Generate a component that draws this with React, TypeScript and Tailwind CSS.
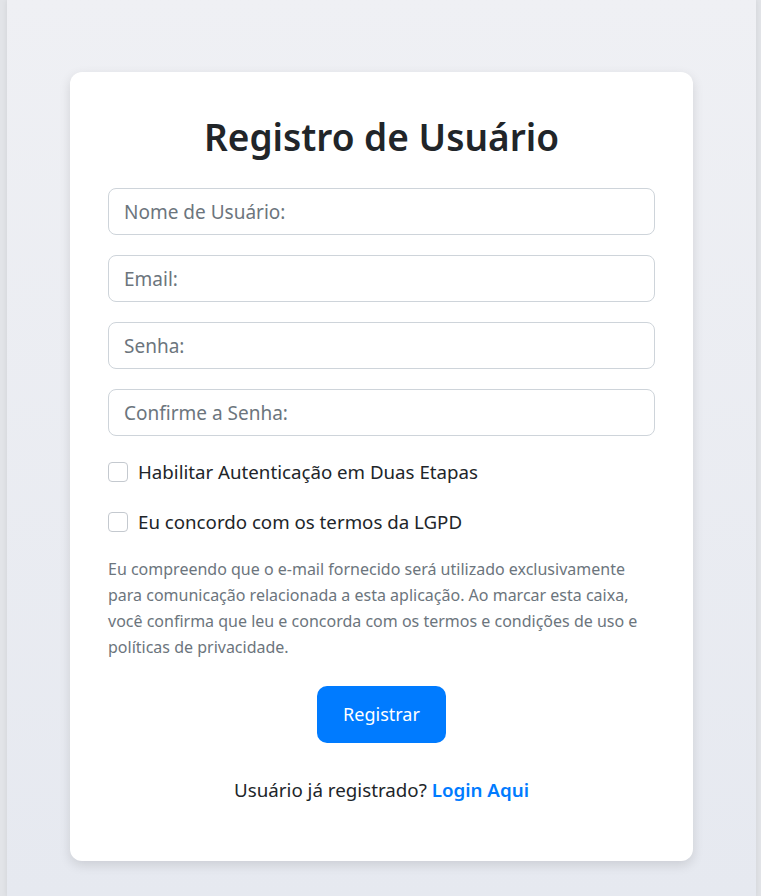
import * as React from "react"

const font = { fontFamily: '"Noto Sans", "Open Sans", sans-serif' }

function Field({ placeholder, type = "text" }: { placeholder: string; type?: string }) {
  return (
    <input
      type={type}
      placeholder={placeholder}
      className="w-full h-[47px] px-[15px] rounded-[8px] border border-[#ced4da] bg-white text-[19px] text-[#212529] placeholder:text-[#6c757d] outline-none"
    />
  )
}

function Check({ label }: { label: string }) {
  return (
    <label className="flex items-center h-[27px] text-[18.7px] text-[#212529] leading-[27px]">
      <span className="w-[20px] h-[20px] rounded-[4px] border border-[#c4c9cf] bg-white mr-[10px] shrink-0" />
      {label}
    </label>
  )
}

export default function App() {
  return (
    <div className="min-h-screen bg-[#e2e4e8] flex" style={font}>
      <div className="flex-1 ml-[7px] mr-[6px] bg-gradient-to-b from-[#eff0f4] to-[#e6e9f0] shadow-[0_0_6px_rgba(0,0,0,0.08)] pt-[72px] pb-[36px]">
        <div className="mx-[63px] w-[623px] bg-white rounded-[12px] shadow-[0_4px_12px_rgba(0,0,0,0.12)] px-[38px] pt-[41px] pb-[58px]">
          <h1 className="text-center text-[37px] leading-[48px] font-semibold text-[#212529] mb-[27px]">
            Registro de Usuário
          </h1>
          <div className="flex flex-col gap-[20px]">
            <Field placeholder="Nome de Usuário:" />
            <Field placeholder="Email:" type="email" />
            <Field placeholder="Senha:" type="password" />
            <Field placeholder="Confirme a Senha:" type="password" />
          </div>
          <div className="mt-[22px] flex flex-col gap-[23px]">
            <Check label="Habilitar Autenticação em Duas Etapas" />
            <Check label="Eu concordo com os termos da LGPD" />
          </div>
          <p className="mt-[21px] text-[16px] leading-[26px] text-[#6c757d]">
            Eu compreendo que o e-mail fornecido será utilizado exclusivamente para comunicação relacionada a esta aplicação. Ao marcar esta caixa, você confirma que leu e concorda com os termos e condições de uso e políticas de privacidade.
          </p>
          <div className="mt-[26px] flex justify-center">
            <button className="w-[129px] h-[57px] rounded-[10px] bg-[#007bff] text-white text-[18px]">
              Registrar
            </button>
          </div>
          <p className="mt-[33px] text-center text-[18.75px] leading-[27px] text-[#212529]">
            Usuário já registrado?{" "}
            <a href="#" className="text-[#007bff] font-semibold">
              Login Aqui
            </a>
          </p>
        </div>
      </div>
    </div>
  )
}
